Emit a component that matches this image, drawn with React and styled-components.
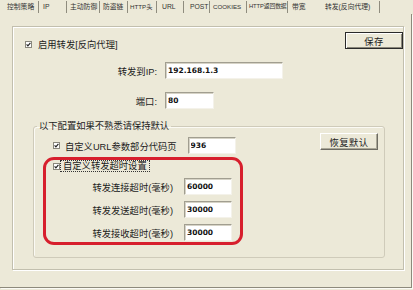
import React from "react";
import styled, { createGlobalStyle } from "styled-components";

const GlobalStyle = createGlobalStyle`
  html, body {
    margin: 0;
    padding: 0;
    background: #ece9d8;
  }
  body {
    font-family: "Liberation Sans", "Noto Sans CJK SC", sans-serif;
  }
`;

const Window = styled.div`
  width: 413px;
  height: 290px;
  box-sizing: border-box;
  display: flex;
  flex-direction: column;
  background: #ece9d8;
  color: #1c1c1c;
  font-size: 9.3px;
  overflow: hidden;
`;

const TabBar = styled.div`
  display: flex;
  height: 14px;
  padding-left: 2px;
`;

const Tab = styled.div`
  width: ${(p) => p.$w}px;
  height: 12px;
  margin-top: 1px;
  padding-left: ${(p) => p.$pad}px;
  box-sizing: border-box;
  font-size: ${(p) => p.$fs || 6.8}px;
  letter-spacing: ${(p) => p.$ls || 0}px;
  line-height: 11px;
  white-space: nowrap;
  overflow: hidden;
  color: #333;
  border-right: ${(p) => (p.$sep ? "1px solid #8f8c7e" : "1px solid transparent")};
`;

const Frame = styled.div`
  flex: 1;
  margin: 0 1px 2px 0;
  padding: 12px 0 0 12px;
  border-right: 1px solid #8d8a7c;
  border-bottom: 1px solid #8d8a7c;
  box-shadow: 1px 1px 0 #fbfaf4;
`;

const Panel = styled.div`
  width: 392px;
  height: 244px;
  box-sizing: border-box;
  border: 1px solid #c2bfae;
  box-shadow: inset 1px 1px 0 #fff, 1px 1px 0 #fff;
`;

const TopRow = styled.div`
  display: flex;
  justify-content: space-between;
  align-items: flex-start;
  margin-top: 5px;
`;

const CheckLabel = styled.label`
  display: flex;
  align-items: center;
  height: 12px;
  margin: ${(p) => p.$mt || 0}px 0 0 ${(p) => p.$ml || 0}px;
  white-space: nowrap;
`;

const Box = styled.span`
  display: inline-flex;
  width: 7px;
  height: 7px;
  box-sizing: border-box;
  margin-right: ${(p) => p.$gap || 6}px;
  border: 1px solid #8a887c;
  background: #fff;
  svg {
    display: block;
  }
`;

const Focus = styled.span`
  padding: 0 2px;
  line-height: 10px;
  outline: 1px dotted #333;
  outline-offset: 0;
`;

const Button = styled.div`
  width: ${(p) => p.$w}px;
  height: 17px;
  margin: ${(p) => p.$mt || 0}px ${(p) => p.$mr || 0}px 0 0;
  box-sizing: border-box;
  display: flex;
  align-items: center;
  justify-content: center;
  border: 1px solid;
  border-color: ${(p) => (p.$primary ? "#2a2a2a" : "#fff #6d6b62 #6d6b62 #fff")};
  box-shadow: ${(p) =>
    p.$primary
      ? "inset 1px 1px 0 #fff, inset -1px -1px 0 #8a877a"
      : "inset -1px -1px 0 #aaa797"};
  background: #ece9d8;
  letter-spacing: 0.4px;
`;

const FieldRow = styled.div`
  display: grid;
  grid-template-columns: ${(p) => p.$label}px auto;
  column-gap: ${(p) => p.$gap}px;
  align-items: center;
  margin-top: ${(p) => p.$mt || 0}px;
`;

const FieldLabel = styled.span`
  text-align: right;
  white-space: nowrap;
`;

const TextInput = styled.input`
  width: ${(p) => p.$w}px;
  height: 17px;
  box-sizing: border-box;
  margin: 0 0 0 ${(p) => p.$ml || 0}px;
  padding: 0 2px;
  border: 1px solid;
  border-color: #a19e90 #f4f2ea #f4f2ea #a19e90;
  box-shadow: inset 1px 1px 0 #d6d3c6;
  background: #fff;
  color: #111;
  font: bold 7.5px "DejaVu Sans", sans-serif;
  outline: none;
`;

const Group = styled.fieldset`
  width: 352px;
  box-sizing: border-box;
  margin: 12px 0 0 20px;
  padding: 0 0 12px 0;
  border: 1px solid #cfcbba;
  border-radius: 3px;
  box-shadow: inset 1px 1px 0 #fbfaf4;

  legend {
    margin-left: 3px;
    padding: 0 2px;
    line-height: 10px;
    font-size: 9.3px;
  }
`;

const GroupTop = styled.div`
  display: flex;
  justify-content: space-between;
  align-items: flex-start;
`;

const UrlRow = styled.div`
  display: flex;
  align-items: center;
  margin: 6px 0 0 19px;
`;

const RedBox = styled.div`
  width: 200px;
  height: 88px;
  box-sizing: border-box;
  margin: 3px 0 0 9px;
  border: 3px solid #d71f2d;
  border-radius: 11px;
  display: flex;
  flex-direction: column;
  gap: 6px;
`;

const Check = ({ gap }) => (
  <Box $gap={gap}>
    <svg width="5" height="5" viewBox="0 0 5 5">
      <path d="M0.6 2.4 L1.9 3.8 L4.4 0.9" fill="none" stroke="#222" strokeWidth="1.2" />
    </svg>
  </Box>
);

const tabs = [
  { t: "控制策略", w: 37, pad: 5, sep: true },
  { t: "IP", w: 28, pad: 4, sep: true },
  { t: "主动防御", w: 33, pad: 3, sep: true },
  { t: "防盗链", w: 28, pad: 3, sep: true },
  { t: "HTTP头", w: 29, pad: 2, sep: true, fs: 6.2 },
  { t: "URL", w: 27, pad: 5, sep: true },
  { t: "POST", w: 26, pad: 6, sep: true },
  { t: "COOKIES", w: 37, pad: 3, sep: true, fs: 6.2 },
  { t: "HTTP返回数据", w: 41, pad: 2, sep: true, fs: 5.8, ls: -0.1 },
  { t: "带宽", w: 32, pad: 4, sep: false },
  { t: "转发(反向代理)", w: 60, pad: 5, sep: true },
];

const timeouts = [
  { label: "转发连接超时(毫秒)", value: "60000" },
  { label: "转发发送超时(毫秒)", value: "30000" },
  { label: "转发接收超时(毫秒)", value: "30000" },
];

export default function App() {
  return (
    <Window>
      <GlobalStyle />
      <TabBar>
        {tabs.map((tab) => (
          <Tab key={tab.t} $w={tab.w} $pad={tab.pad} $sep={tab.sep} $fs={tab.fs} $ls={tab.ls}>
            {tab.t}
          </Tab>
        ))}
      </TabBar>
      <Frame>
        <Panel>
          <TopRow>
            <CheckLabel $mt={6} $ml={12}>
              <Check />
              启用转发[反向代理]
            </CheckLabel>
            <Button $w={58} $primary>保存</Button>
          </TopRow>

          <FieldRow $label={144} $gap={8} $mt={12}>
            <FieldLabel>转发到IP:</FieldLabel>
            <TextInput $w={118} readOnly value="192.168.1.3" />
          </FieldRow>
          <FieldRow $label={144} $gap={8} $mt={13}>
            <FieldLabel>端口:</FieldLabel>
            <TextInput $w={49} readOnly value="80" />
          </FieldRow>

          <Group>
            <legend>以下配置如果不熟悉请保持默认</legend>
            <GroupTop>
              <UrlRow>
                <Check gap={5} />
                <span>自定义URL参数部分代码页</span>
                <TextInput $w={48} $ml={11} readOnly value="936" />
              </UrlRow>
              <Button $w={58} $mt={2} $mr={6}>恢复默认</Button>
            </GroupTop>

            <RedBox>
              <CheckLabel $ml={7}>
                <Check gap={1} />
                <Focus>自定义转发超时设置</Focus>
              </CheckLabel>
              {timeouts.map((row) => (
                <FieldRow key={row.label} $label={127} $gap={11}>
                  <FieldLabel>{row.label}</FieldLabel>
                  <TextInput $w={48} readOnly value={row.value} />
                </FieldRow>
              ))}
            </RedBox>
          </Group>
        </Panel>
      </Frame>
    </Window>
  );
}
